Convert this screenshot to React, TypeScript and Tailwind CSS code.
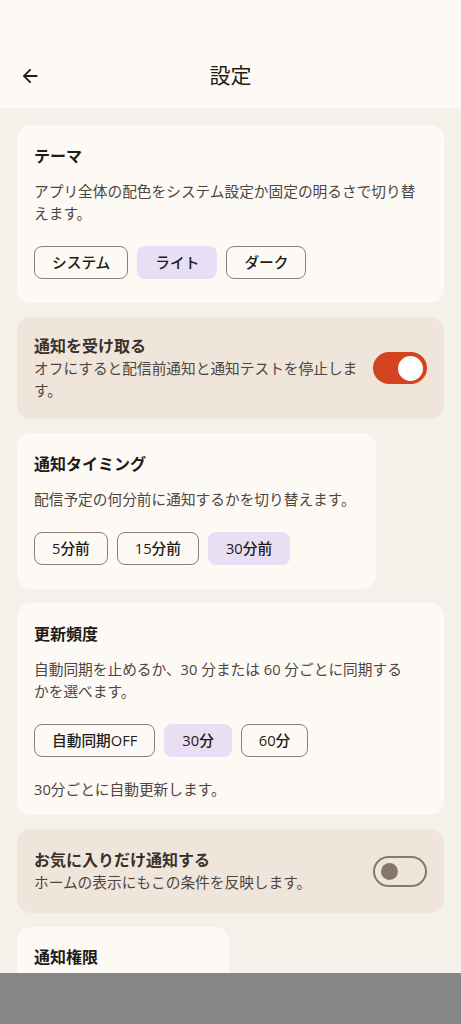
import React from 'react';

type Option = { label: string; selected?: boolean };

function Chips({ options }: { options: Option[] }) {
  return (
    <div className="flex gap-[9px]">
      {options.map((o) => (
        <button
          key={o.label}
          className={
            o.selected
              ? 'h-[33px] px-[18px] rounded-[8px] bg-[#e8dff5] text-[#1f1b16] text-[14.7px] font-medium leading-none'
              : 'h-[33px] px-[17px] rounded-[8px] border border-[#8a7e76] text-[#1f1b16] text-[14.7px] font-medium leading-none'
          }
        >
          {o.label}
        </button>
      ))}
    </div>
  );
}

function Switch({ on }: { on: boolean }) {
  if (on) {
    return (
      <div className="w-[54px] h-[32px] shrink-0 rounded-full bg-[#d3431f] flex items-center justify-end pr-[4px]">
        <div className="w-[25px] h-[25px] rounded-full bg-white" />
      </div>
    );
  }
  return (
    <div className="w-[54px] h-[31px] shrink-0 rounded-full border-2 border-[#85786f] flex items-center pl-[6px]">
      <div className="w-[17px] h-[17px] rounded-full bg-[#85776d]" />
    </div>
  );
}

function ToggleCard({
  title,
  desc,
  on,
}: {
  title: string;
  desc: string;
  on: boolean;
}) {
  return (
    <section className="rounded-[14px] bg-[#f0e5da] px-[17px] py-[18px]">
      <div className="min-h-[48px] flex items-center gap-[12px]">
        <div className="flex-1">
          <h2 className="text-[16px] leading-[22px] font-bold text-[#3a302b]">{title}</h2>
          <p className="text-[14.7px] leading-[22px] text-[#4f4540]">{desc}</p>
        </div>
        <Switch on={on} />
      </div>
    </section>
  );
}

export default function App() {
  return (
    <div
      className="h-[1024px] flex flex-col bg-[#f4f0ea] overflow-hidden"
      style={{ fontFamily: '"Open Sans", "Noto Sans CJK JP", sans-serif' }}
    >
      {/* Header */}
      <header className="h-[108px] shrink-0 bg-[#fdfaf5] pt-[44px]">
        <div className="h-[64px] flex items-center px-[19px]">
          <svg width="22" height="22" viewBox="0 0 24 24" fill="#1f1b16">
            <path d="M20 11H7.83l5.59-5.59L12 4l-8 8 8 8 1.41-1.41L7.83 13H20v-2z" />
          </svg>
          <h1 className="flex-1 text-center text-[21px] text-[#1f1b16] pr-[22px]">設定</h1>
        </div>
      </header>

      {/* Main Content */}
      <main className="flex-1 overflow-hidden px-[17px] pt-[17px] flex flex-col gap-[14px] items-stretch">
        <section className="rounded-[14px] bg-[#fdfaf6] px-[17px] pt-[19px] pb-[24px]">
          <h2 className="text-[16px] leading-[24px] font-bold text-[#1f1b16]">テーマ</h2>
          <p className="mt-[12px] text-[14.7px] leading-[22px] text-[#4f4540]">
            アプリ全体の配色をシステム設定か固定の明るさで切り替えます。
          </p>
          <div className="mt-[22px]">
            <Chips options={[{ label: 'システム' }, { label: 'ライト', selected: true }, { label: 'ダーク' }]} />
          </div>
        </section>

        <ToggleCard
          title="通知を受け取る"
          desc="オフにすると配信前通知と通知テストを停止します。"
          on={true}
        />

        <section className="self-start rounded-[14px] bg-[#fdfaf6] pl-[17px] pr-[20px] pt-[19px] pb-[24px]">
          <h2 className="text-[16px] leading-[24px] font-bold text-[#1f1b16]">通知タイミング</h2>
          <p className="mt-[12px] text-[14.7px] leading-[22px] text-[#4f4540]">
            配信予定の何分前に通知するかを切り替えます。
          </p>
          <div className="mt-[22px]">
            <Chips options={[{ label: '5分前' }, { label: '15分前' }, { label: '30分前', selected: true }]} />
          </div>
        </section>

        <section className="rounded-[14px] bg-[#fdfaf6] px-[17px] pt-[19px] pb-[15px]">
          <h2 className="text-[16px] leading-[24px] font-bold text-[#1f1b16]">更新頻度</h2>
          <p className="mt-[12px] text-[14.7px] leading-[22px] text-[#4f4540]">
            自動同期を止めるか、30 分または 60 分ごとに同期する
            <br />
            かを選べます。
          </p>
          <div className="mt-[22px]">
            <Chips options={[{ label: '自動同期OFF' }, { label: '30分', selected: true }, { label: '60分' }]} />
          </div>
          <p className="mt-[21px] text-[14.7px] leading-[22px] text-[#4f4540]">30分ごとに自動更新します。</p>
        </section>

        <ToggleCard
          title="お気に入りだけ通知する"
          desc="ホームの表示にもこの条件を反映します。"
          on={false}
        />

        <section className="w-[212px] shrink-0 rounded-[14px] bg-[#fdfaf6] px-[17px] pt-[18px] pb-[60px]">
          <h2 className="text-[16px] leading-[24px] font-bold text-[#1f1b16]">通知権限</h2>
        </section>
      </main>

      <div className="h-[51px] shrink-0 bg-[#868686]" />
    </div>
  );
}
